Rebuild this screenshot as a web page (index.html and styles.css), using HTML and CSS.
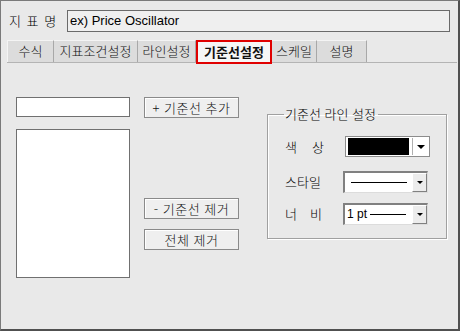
FILE: index.html
```html
<!DOCTYPE html>
<html lang="ko">
<head>
<meta charset="utf-8">
<link rel="stylesheet" href="styles.css">
</head>
<body>
<div class="window">
  <div class="title-row">
    <span class="title-label">지 표 명</span>
    <div class="title-input">ex) Price Oscillator</div>
  </div>
  <div class="tabs">
    <div class="tab t1">수식</div>
    <div class="tab t2">지표조건설정</div>
    <div class="tab t3">라인설정</div>
    <div class="tab t4 active">기준선설정</div>
    <div class="tab t5">스케일</div>
    <div class="tab t6">설명</div>
  </div>
  <div class="content">
    <div class="col-left">
      <div class="text-input"></div>
      <div class="listbox"></div>
    </div>
    <div class="col-mid">
      <button class="btn btn-add">+ 기준선 추가</button>
      <button class="btn btn-remove">- 기준선 제거</button>
      <button class="btn btn-clear">전체 제거</button>
    </div>
    <fieldset class="group">
      <legend class="group-legend">기준선 라인 설정</legend>
      <div class="row row1">
        <span class="row-label">색 상</span>
        <div class="combo combo-color">
          <div class="swatch"></div>
          <div class="color-arrow"><span class="tri"></span></div>
        </div>
      </div>
      <div class="row row2">
        <span class="row-label">스타일</span>
        <div class="combo combo-sunken">
          <div class="combo-value"><span class="line long"></span></div>
          <div class="arrow-btn"><span class="tri"></span></div>
        </div>
      </div>
      <div class="row row3">
        <span class="row-label">너 비</span>
        <div class="combo combo-sunken">
          <div class="combo-value"><span class="pt">1 pt</span><span class="line short"></span></div>
          <div class="arrow-btn"><span class="tri"></span></div>
        </div>
      </div>
    </fieldset>
  </div>
</div>
</body>
</html>
```
FILE: styles.css
```css
html, body {
  margin: 0;
  padding: 0;
  background: #e9e9e9;
}
body {
  font-family: "Noto Sans CJK KR", "Liberation Sans", sans-serif;
  font-size: 12px;
  font-weight: 300;
  color: #000;
}
.window {
  width: 460px;
  height: 331px;
  box-sizing: border-box;
  border-top: 1px solid #7a7a7a;
  border-left: 1px solid #7a7a7a;
  border-right: 2px solid #505050;
  border-bottom: 2px solid #505050;
  background: #e9e9e9;
}
.title-row {
  display: flex;
  align-items: center;
  padding: 9px 0 0 8px;
}
.title-label {
  width: 58px;
  font-size: 13px;
  line-height: 22px;
  letter-spacing: 1px;
}
.title-input {
  width: 383px;
  height: 22px;
  box-sizing: border-box;
  border: 1px solid #6a6a6a;
  background: #efefef;
  font-family: "Liberation Sans", Arial, sans-serif;
  font-weight: 400;
  font-size: 13px;
  line-height: 19px;
  padding-left: 2px;
}
.tabs {
  display: flex;
  margin: 8px 1px 0 6px;
  border-bottom: 1px solid #b4b4b4;
  height: 22px;
}
.tab {
  box-sizing: border-box;
  height: 22px;
  background: #dcdcdc;
  border-top: 1px solid #f4f4f4;
  border-right: 1px solid #a8a8a8;
  text-align: center;
  font-size: 13px;
  line-height: 20px;
  color: #111;
}
.t1 { width: 47px; border-left: 1px solid #f4f4f4; }
.t2 { width: 84px; }
.t3 { width: 58px; }
.t4 { width: 76px; }
.t5 { width: 45px; }
.t6 { width: 50px; }
.tab.active {
  height: 24px;
  border: 2px solid #e00000;
  background: #f6f6f6;
  font-weight: bold;
  line-height: 19px;
  position: relative;
}
.content {
  display: flex;
  align-items: flex-start;
  padding: 34px 0 0 15px;
}
.col-left {
  display: flex;
  flex-direction: column;
  width: 114px;
}
.text-input {
  height: 20px;
  box-sizing: border-box;
  border: 1px solid #707070;
  background: #fff;
}
.listbox {
  margin-top: 12px;
  height: 149px;
  box-sizing: border-box;
  border: 1px solid #707070;
  background: #fff;
}
.col-mid {
  display: flex;
  flex-direction: column;
  width: 95px;
  margin-left: 14px;
}
.btn {
  box-sizing: border-box;
  height: 21px;
  width: 95px;
  margin: 0;
  padding: 0;
  border: 1px solid #8a8a8a;
  background: #efefef;
  box-shadow: inset 1px 1px 0 #fff;
  font-family: "Noto Sans CJK KR", sans-serif;
  font-weight: 300;
  font-size: 13px;
  line-height: 18px;
  color: #111;
  letter-spacing: 0.5px;
}
.btn-remove { margin-top: 80px; }
.btn-clear { margin-top: 10px; }
.group {
  margin: 10px 0 0 28px;
  width: 180px;
  box-sizing: border-box;
  height: 132px;
  padding: 0 0 0 17px;
  border: 1px solid #a0a0a0;
  box-shadow: 1px 1px 0 #fff, inset 1px 1px 0 #fff;
}
.group-legend {
  padding: 0 2px 0 1px;
  margin-left: -1px;
  font-size: 13px;
  line-height: 14px;
}
.row {
  display: flex;
  align-items: center;
  height: 21px;
}
.row1 { margin-top: 15px; }
.row2 { margin-top: 14px; }
.row3 { margin-top: 11px; }
.row-label {
  width: 37px;
  font-size: 13px;
  text-align: justify;
  text-align-last: justify;
  white-space: nowrap;
}
.row1 .row-label { width: 39px; }
.combo {
  margin-left: 21px;
  width: 85px;
  height: 21px;
  box-sizing: border-box;
  display: flex;
  background: #fff;
}
.combo-color {
  border: 1px solid #8c8c8c;
  padding: 1px 0 1px 2px;
}
.swatch {
  width: 61px;
  background: #000;
}
.color-arrow {
  flex: 1;
  margin-left: 3px;
  border-left: 1px solid #b0b0b0;
  display: flex;
  align-items: center;
  justify-content: center;
}
.tri {
  width: 0;
  height: 0;
  border-left: 4px solid transparent;
  border-right: 4px solid transparent;
  border-top: 4px solid #000;
}
.combo-sunken {
  border-top: 2px solid #808080;
  border-left: 2px solid #808080;
  border-right: 1px solid #dcdcdc;
  border-bottom: 1px solid #dcdcdc;
  height: 22px;
}
.combo-value {
  flex: 1;
  display: flex;
  align-items: center;
  padding-left: 2px;
}
.line {
  display: block;
  height: 1px;
  background: #000;
}
.line.long { width: 56px; margin-left: 4px; }
.line.short { width: 36px; margin-left: 3px; }
.pt {
  font-family: "Liberation Sans", Arial, sans-serif;
  font-weight: 400;
  font-size: 12px;
}
.arrow-btn {
  width: 15px;
  box-sizing: border-box;
  background: #ececec;
  border-top: 1px solid #fff;
  border-left: 1px solid #fff;
  border-right: 1px solid #808080;
  border-bottom: 1px solid #808080;
  display: flex;
  align-items: center;
  justify-content: center;
}
.arrow-btn .tri {
  border-left-width: 3px;
  border-right-width: 3px;
  border-top-width: 3px;
}
```
